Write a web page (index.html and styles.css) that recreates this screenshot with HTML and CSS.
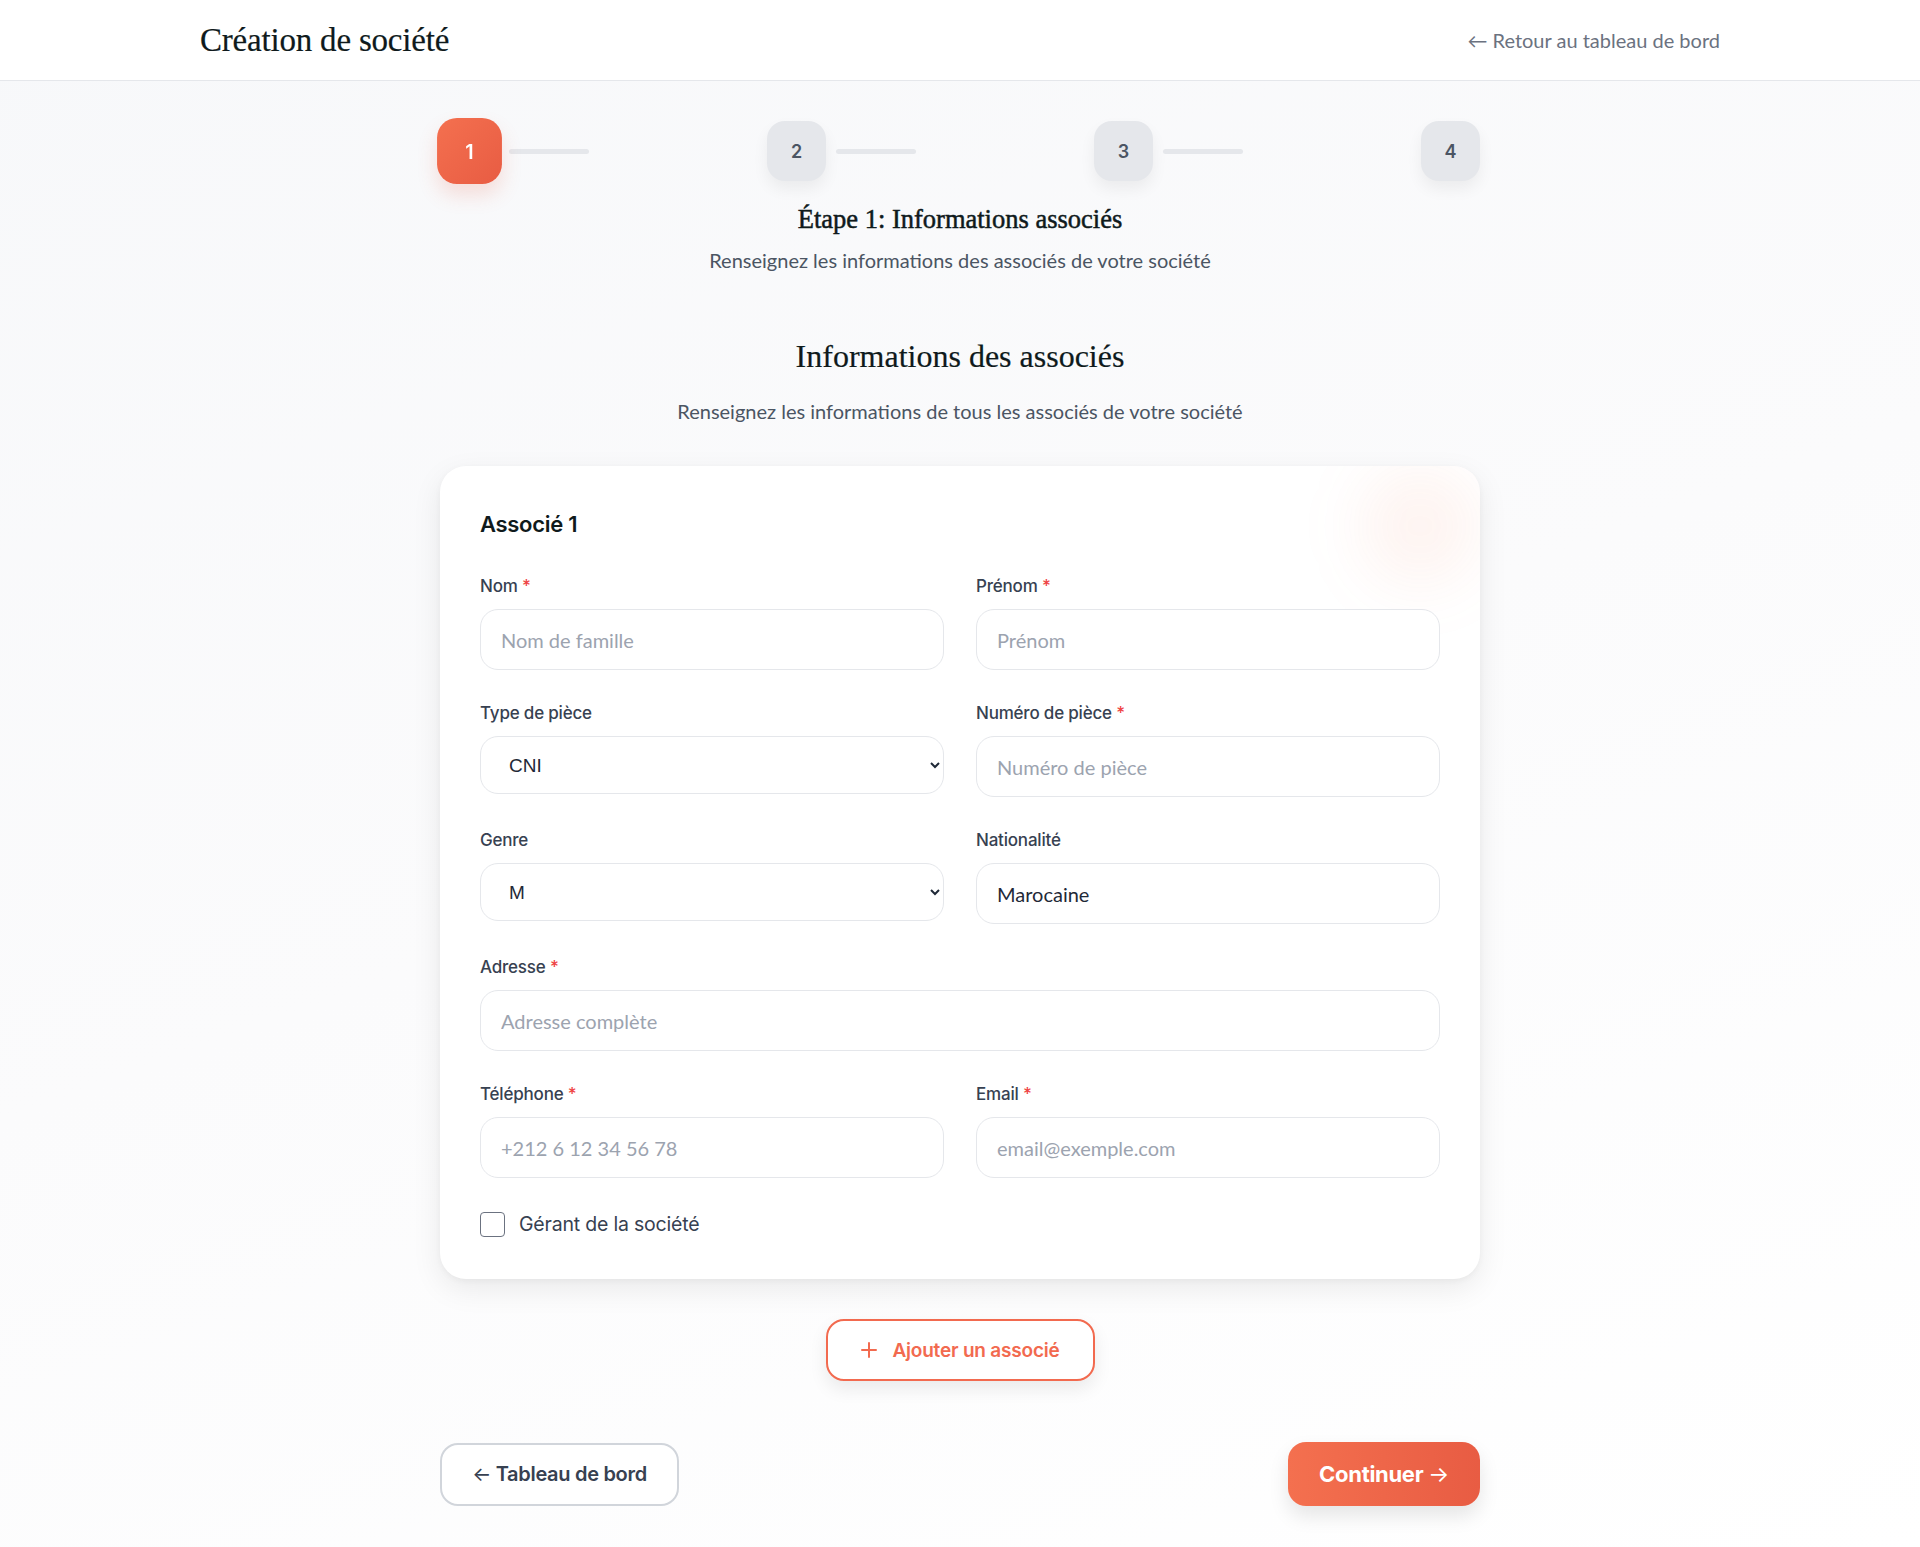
FILE: index.html
```html
<!DOCTYPE html>
<html lang="fr">
<head>
<meta charset="utf-8">
<title>Création de société</title>
<link rel="stylesheet" href="styles.css">
</head>
<body>
<header class="topbar">
  <div class="topbar-inner">
    <h1 class="brand">Création de société</h1>
    <a class="back-link" href="#">← Retour au tableau de bord</a>
  </div>
</header>
<main class="page">
  <div class="stepper">
    <div class="step">
      <div class="step-box active">1</div>
      <div class="step-line"></div>
    </div>
    <div class="step">
      <div class="step-box">2</div>
      <div class="step-line"></div>
    </div>
    <div class="step">
      <div class="step-box">3</div>
      <div class="step-line"></div>
    </div>
    <div class="step">
      <div class="step-box">4</div>
    </div>
  </div>
  <h2 class="step-title">Étape 1: Informations associés</h2>
  <p class="step-sub">Renseignez les informations des associés de votre société</p>

  <h2 class="section-title">Informations des associés</h2>
  <p class="section-sub">Renseignez les informations de tous les associés de votre société</p>

  <section class="card">
    <div class="card-glow"></div>
    <h3 class="card-title">Associé 1</h3>
    <div class="form-grid">
      <div class="field">
        <label class="label">Nom <span class="req">*</span></label>
        <input class="input" type="text" placeholder="Nom de famille">
      </div>
      <div class="field">
        <label class="label">Prénom <span class="req">*</span></label>
        <input class="input" type="text" placeholder="Prénom">
      </div>
      <div class="field">
        <label class="label">Type de pièce</label>
        <select class="select"><option>CNI</option></select>
      </div>
      <div class="field">
        <label class="label">Numéro de pièce <span class="req">*</span></label>
        <input class="input" type="text" placeholder="Numéro de pièce">
      </div>
      <div class="field">
        <label class="label">Genre</label>
        <select class="select"><option>M</option></select>
      </div>
      <div class="field">
        <label class="label">Nationalité</label>
        <input class="input" type="text" value="Marocaine">
      </div>
      <div class="field full">
        <label class="label">Adresse <span class="req">*</span></label>
        <input class="input" type="text" placeholder="Adresse complète">
      </div>
      <div class="field">
        <label class="label">Téléphone <span class="req">*</span></label>
        <input class="input" type="text" placeholder="+212 6 12 34 56 78">
      </div>
      <div class="field">
        <label class="label">Email <span class="req">*</span></label>
        <input class="input" type="text" placeholder="email@exemple.com">
      </div>
    </div>
    <label class="check-row">
      <span class="checkbox"></span>
      <span class="check-label">Gérant de la société</span>
    </label>
  </section>

  <div class="add-row">
    <button class="btn-add">
      <svg width="18" height="18" viewBox="0 0 18 18" fill="none" stroke="currentColor" stroke-width="2" stroke-linecap="round"><path d="M9 2v14M2 9h14"/></svg>
      <span>Ajouter un associé</span>
    </button>
  </div>

  <div class="nav-row">
    <button class="btn-back"><span class="arr">←</span> Tableau de bord</button>
    <button class="btn-next">Continuer <span class="arr">→</span></button>
  </div>
</main>
</body>
</html>
```
FILE: styles.css
```css
* { box-sizing: border-box; }
html, body { margin: 0; padding: 0; }
body {
  font-family: "Lato", "Noto Sans", sans-serif;
  background: linear-gradient(160deg, #f7f8fa 0%, #fbfbfc 50%, #ffffff 100%);
  color: #1f2937;
  min-height: 1547px;
}
.topbar {
  background: #ffffff;
  border-bottom: 1px solid #e5e7eb;
  height: 81px;
}
.topbar-inner {
  width: 1520px;
  margin: 0 auto;
  height: 80px;
  display: flex;
  align-items: center;
  justify-content: space-between;
}
.brand {
  margin: 0;
  font-family: "Liberation Serif", serif;
  font-weight: 400;
  font-size: 33px;
  color: #0f1a1c;
  letter-spacing: -0.2px;
  -webkit-text-stroke: 0.2px #0f1a1c;
}
.back-link {
  font-size: 20px;
  color: #6b7280;
  text-decoration: none;
  font-weight: 400;
}
.page {
  width: 1040px;
  margin: 0 auto;
  padding-top: 40px;
  padding-bottom: 40px;
}
.stepper {
  display: flex;
  justify-content: space-between;
  align-items: center;
}
.step {
  display: flex;
  align-items: center;
}
.step-box {
  width: 59px;
  height: 60px;
  border-radius: 18px;
  background: #e5e7eb;
  color: #4b5563;
  font-family: "Inter", sans-serif;
  font-weight: 600;
  font-size: 18px;
  display: flex;
  align-items: center;
  justify-content: center;
  box-shadow: 0 8px 16px rgba(0,0,0,0.06);
}
.step-box.active {
  background: linear-gradient(135deg, #f4704f, #e85c43);
  color: #ffffff;
  transform: scale(1.1);
  box-shadow: 0 10px 18px rgba(232, 92, 67, 0.18);
}
.step-line {
  width: 80px;
  height: 5px;
  border-radius: 3px;
  background: #e5e7eb;
  margin-left: 10px;
}
.step-title {
  margin: 22px 0 0;
  text-align: center;
  font-family: "Liberation Serif", serif;
  font-weight: 400;
  font-size: 26.5px;
  line-height: 32px;
  color: #0f1a1c;
  -webkit-text-stroke: 0.5px #0f1a1c;
}
.step-sub {
  margin: 11px 0 0;
  text-align: center;
  font-size: 20px;
  line-height: 28px;
  color: #4b5563;
}
.section-title {
  margin: 62px 0 0;
  text-align: center;
  font-family: "Liberation Serif", serif;
  font-weight: 400;
  font-size: 32px;
  line-height: 40px;
  color: #0f1a1c;
  -webkit-text-stroke: 0.2px #0f1a1c;
}
.section-sub {
  margin: 21px 0 0;
  text-align: center;
  font-size: 20px;
  line-height: 28px;
  color: #4b5563;
}
.card {
  position: relative;
  overflow: hidden;
  margin-top: 41px;
  background: #ffffff;
  border-radius: 26px;
  padding: 40px;
  box-shadow: 0 10px 30px rgba(0,0,0,0.08), 0 2px 6px rgba(0,0,0,0.04);
}
.card-glow {
  position: absolute;
  right: 0;
  top: 0;
  width: 120px;
  height: 120px;
  border-radius: 50%;
  background: rgba(244, 112, 79, 0.08);
  filter: blur(30px);
  pointer-events: none;
}
.card-title {
  position: relative;
  margin: 0;
  font-family: "Inter", sans-serif;
  font-weight: 600;
  font-size: 22px;
  line-height: 36px;
  color: #0f1a1c;
  letter-spacing: -0.3px;
}
.form-grid {
  position: relative;
  margin-top: 32px;
  display: grid;
  grid-template-columns: 1fr 1fr;
  column-gap: 32px;
  row-gap: 31px;
}
.field { display: flex; flex-direction: column; }
.field.full { grid-column: 1 / span 2; }
.label {
  font-family: "Inter", sans-serif;
  font-size: 17px;
  line-height: 24px;
  font-weight: 500;
  color: #374151;
  margin-bottom: 11px;
  letter-spacing: -0.2px;
}
.req { color: #ef4444; }
.input, .select {
  width: 100%;
  height: 61px;
  border: 1px solid #e5e7eb;
  border-radius: 18px;
  background: #ffffff;
  padding: 0 20px;
  font-family: "Lato", sans-serif;
  font-size: 20px;
  color: #1f2937;
  outline: none;
}
.input::placeholder { color: #9ca3af; }
.select {
  height: 58px;
  padding: 0 14px 0 24px;
  font-family: "Liberation Sans", sans-serif;
  font-size: 19px;
  color: #1f2937;
}
.check-row {
  position: relative;
  display: flex;
  align-items: center;
  gap: 14px;
  margin-top: 31px;
  height: 30px;
}
.checkbox {
  width: 25px;
  height: 25px;
  border: 1.5px solid #6b7280;
  border-radius: 4px;
  background: #fff;
}
.check-label {
  font-family: "Inter", sans-serif;
  font-size: 19.5px;
  color: #374151;
  letter-spacing: -0.2px;
}
.add-row {
  display: flex;
  justify-content: center;
  margin-top: 40px;
}
.btn-add {
  height: 62px;
  width: 269px;
  display: flex;
  align-items: center;
  justify-content: center;
  gap: 14px;
  border: 2px solid #f26a4f;
  border-radius: 18px;
  background: #ffffff;
  color: #f26a4f;
  font-family: "Inter", sans-serif;
  font-weight: 600;
  font-size: 19px;
  letter-spacing: -0.2px;
  box-shadow: 0 8px 18px rgba(0,0,0,0.08);
}
.nav-row {
  display: flex;
  justify-content: space-between;
  align-items: center;
  margin-top: 61px;
}
.btn-back {
  height: 63px;
  width: 239px;
  border: 2px solid #d1d5db;
  border-radius: 18px;
  background: #ffffff;
  color: #374151;
  font-family: "Inter", sans-serif;
  font-weight: 600;
  font-size: 20px;
  letter-spacing: -0.3px;
}
.btn-next {
  height: 64px;
  width: 192px;
  border: none;
  border-radius: 18px;
  background: linear-gradient(90deg, #f4704f, #e85c43);
  color: #ffffff;
  font-family: "Inter", sans-serif;
  font-weight: 700;
  font-size: 22px;
  letter-spacing: -0.3px;
  box-shadow: 0 10px 20px rgba(0,0,0,0.10);
}
.arr { font-weight: 400; }
```
